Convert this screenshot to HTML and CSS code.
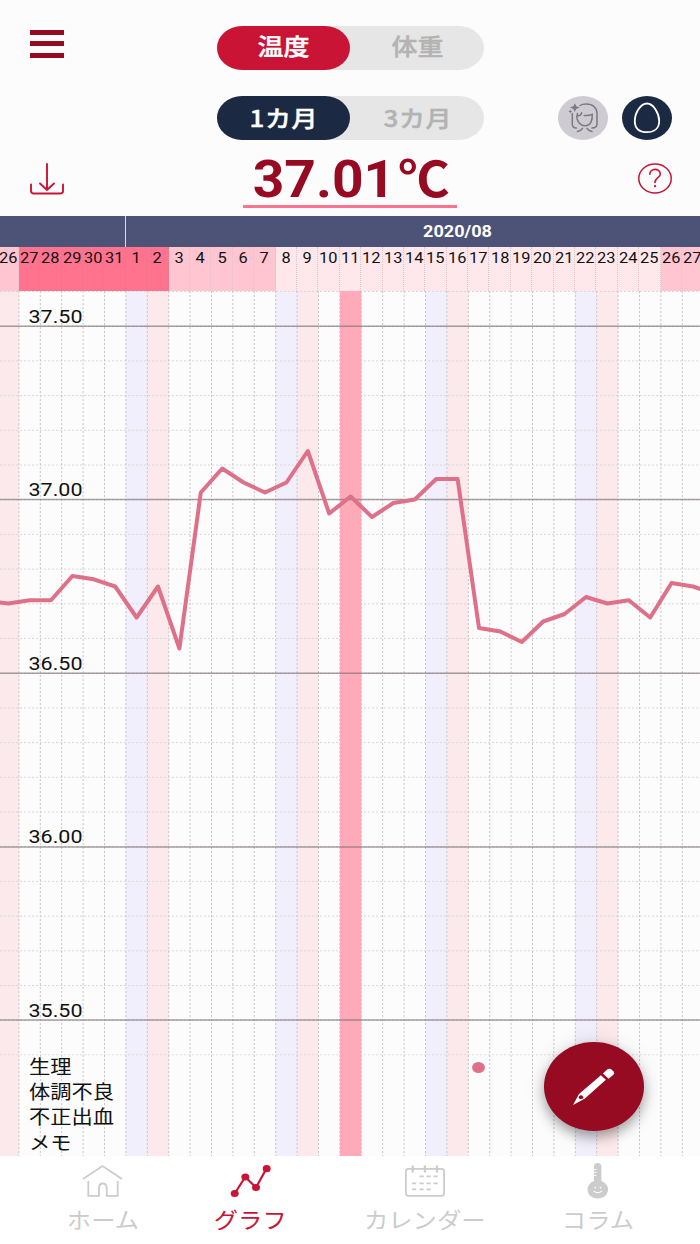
FILE: index.html
```html
<!DOCTYPE html>
<html lang="ja">
<head>
<meta charset="utf-8">
<title>グラフ</title>
<link rel="stylesheet" href="styles.css">
</head>
<body>
<div class="app">
  <header class="header">
    <button class="menu" aria-label="menu"><i></i><i></i><i></i></button>
    <div class="toggle toggle-red"><span class="option on"><b>温度</b></span><span class="option"><b>体重</b></span></div>
    <div></div>

    <div></div>
    <div class="toggle toggle-navy"><span class="option on"><b>1カ月</b></span><span class="option"><b>3カ月</b></span></div>
    <div class="modes">
      <svg width="50" height="44" viewBox="0 0 50 44"><ellipse cx="25" cy="22" rx="25" ry="22" fill="#cfcbd3"/>
        <g fill="none" stroke="#7b7b7f" stroke-width="1.500" stroke-linecap="round">
          <path d="M14.300 17.500V28c0 2.600 1.300 4 4 4.100M22 9.500c1.800-1.200 4-1.500 6.300-1.500C35 8 39 12 39 17.500V28c0 2.600-1.800 4-5 4.100"/>
          <path d="M19.500 17.500C17.500 23 21 29.700 27 29.700S34.600 24 34.200 18.300C31.500 19.700 29 19.400 26.200 19.400M20.300 19.800c2-.300 3-1.500 3.300-3"/>
          <path d="M19.500 35.500c2.500-.5 4-1.500 5-3.200M34 35.500c-2.500-.5-4-1.500-5-3.200"/>
        </g>
        <path d="M16.800 7.200l1.400 3 3.500 1.400-3.500 1.400-1.400 3-1.400-3-3.500-1.400 3.500-1.400zM12.300 13.400l.6 1.400 1.400.6-1.400.6-.6 1.400-.6-1.400-1.400-.6 1.400-.6z" fill="#7b7b7f"/>
      </svg>
      <svg width="50" height="44" viewBox="0 0 50 44"><ellipse cx="25" cy="22" rx="25" ry="22" fill="#1c2942"/><path d="M25 7.500C18.500 7.500 12.800 17 12.800 25S18 36.200 25 36.200 37.200 32.500 37.200 25 31.500 7.500 25 7.500z" fill="none" stroke="#fff" stroke-width="1.800"/></svg>
    </div>

    <svg class="download" width="34" height="32" viewBox="0 0 34 32" fill="none" stroke="#c91436" stroke-width="1.900" stroke-linecap="round" stroke-linejoin="round"><path d="M17 1v26M10 20.500l7 6.500 7-6.500M1 21.500V28q0 2.500 3 2.500H30q3 0 3-2.500V21.500"/></svg>
    <div class="reading"><strong>37.01<span>℃</span></strong></div>
    <svg class="help" width="34" height="31" viewBox="0 0 34 31" fill="none" stroke="#c91436"><ellipse cx="17" cy="15.500" rx="16.200" ry="14.500" stroke-width="1.500"/><path d="M11.800 11.300C11.800 4.800 22.300 4.800 22.300 11 22.300 14.800 17 14.800 17 19.500" stroke-width="1.600" stroke-linecap="round"/><ellipse cx="17" cy="23.200" rx="1.200" ry="1.100" fill="#c91436" stroke="none"/></svg>
  </header>

  <div class="months"><span></span><span><b>2020/08</b></span></div>

  <div class="days">
    <span class="mid"><b>26</b></span><span class="hot"><b>27</b></span><span class="hot"><b>28</b></span><span class="hot"><b>29</b></span><span class="hot"><b>30</b></span><span class="hot"><b>31</b></span><span class="hot"><b>1</b></span><span class="hot"><b>2</b></span><span class="mid"><b>3</b></span><span class="mid"><b>4</b></span><span class="mid"><b>5</b></span><span class="mid"><b>6</b></span><span class="mid"><b>7</b></span><span><b>8</b></span><span><b>9</b></span><span><b>10</b></span><span><b>11</b></span><span><b>12</b></span><span><b>13</b></span><span><b>14</b></span><span><b>15</b></span><span><b>16</b></span><span><b>17</b></span><span><b>18</b></span><span><b>19</b></span><span><b>20</b></span><span><b>21</b></span><span><b>22</b></span><span><b>23</b></span><span><b>24</b></span><span><b>25</b></span><span class="mid"><b>26</b></span><span class="mid"><b>27</b></span>
  </div>

  <main class="chart">
    <svg width="700" height="865" viewBox="0 291 700 865">
      <defs>
        <pattern id="rows" x="0" y="291" width="4" height="34.700" patternUnits="userSpaceOnUse"><rect width="2.200" height="1" fill="#d9d9d9"/></pattern>
        <pattern id="cols" x="18.400" y="291" width="21.400" height="4" patternUnits="userSpaceOnUse"><rect width="1" height="2.200" fill="#c6c6c6"/></pattern>
      </defs>
      <g fill="#f1effb"><path d="M125.900 291h21.400v865h-21.400zM275.700 291h21.400v865h-21.400zM425.500 291h21.400v865h-21.400zM575.300 291h21.400v865h-21.400z"/></g>
      <g fill="#fce9eb"><path d="M0 291h18.900v865H0zM147.300 291h21.400v865h-21.400zM297.100 291h21.400v865h-21.400zM446.900 291h21.400v865h-21.400zM596.700 291h21.400v865h-21.400z"/></g>
      <rect y="291" width="700" height="764.500" fill="url(#rows)"/>
      <rect y="291" width="700" height="865" fill="url(#cols)"/>
      <rect x="339.900" y="291" width="21.400" height="865" fill="#ffaab9"/>
      <path class="major" d="M0 326.300H700M0 499.500H700M0 673.200H700M0 847H700M0 1020H700"/>
      <polyline class="temp" points="-13,601 8.200,603.500 29.600,600.200 51,600.200 72.400,576 93.800,579.300 115.200,586.500 136.600,617.500 158,586.500 179.400,648.500 200.800,492.500 222.200,468.500 243.600,482.500 265,492.500 286.400,482.500 307.800,451 329.200,513.500 350.600,496.500 372,517 393.400,503 414.800,499.500 436.200,479 457.600,479 479,628 500.400,631.500 521.800,642 543.200,621.500 564.600,614 586,597 607.400,603.500 628.800,600.200 650.200,617.500 671.600,583 693,586.500 714.400,594"/>
      <ellipse cx="478.500" cy="1067.500" rx="6.400" ry="5.500" fill="#de7089"/>
      <g class="scale">
        <text x="28.500" y="322.600" textLength="54" lengthAdjust="spacingAndGlyphs">37.50</text>
        <text x="28.500" y="496.200" textLength="54" lengthAdjust="spacingAndGlyphs">37.00</text>
        <text x="28.500" y="669.500" textLength="54" lengthAdjust="spacingAndGlyphs">36.50</text>
        <text x="28.500" y="843.200" textLength="54" lengthAdjust="spacingAndGlyphs">36.00</text>
        <text x="28.500" y="1016.500" textLength="54" lengthAdjust="spacingAndGlyphs">35.50</text>
      </g>
      <g class="notes">
        <text x="29" y="1073.500" textLength="42.500" lengthAdjust="spacingAndGlyphs">生理</text>
        <text x="29" y="1099" textLength="85" lengthAdjust="spacingAndGlyphs">体調不良</text>
        <text x="29" y="1124.300" textLength="85" lengthAdjust="spacingAndGlyphs">不正出血</text>
        <text x="29" y="1149.500" textLength="42.500" lengthAdjust="spacingAndGlyphs">メモ</text>
      </g>
    </svg>
    <button class="edit" aria-label="edit">
      <svg width="42" height="38" viewBox="0 0 42 38" fill="#fff"><path d="M0 37L6 26 27.900 7.200 32.900 11.800 11.600 30.800z"/><path d="M29.900 5.400L34.200 1.600Q36.400 0 38.500 1.500L40.600 3.500Q42 5.200 40.400 6.800L35.600 10.800z"/><ellipse cx="8" cy="29.200" rx="2.200" ry="1.900" fill="#960a22"/></svg>
    </button>
  </main>

  <nav class="tabs">
    <a class="tab"><svg width="42" height="38" viewBox="0 0 42 38" fill="none" stroke="#ccc" stroke-width="1.800"><path d="M1 18L20.500 5 40 18" /><path d="M6.300 20V34.800H17V27Q17 22.500 20.800 22.500T24.700 27V34.800H35.700V20"/></svg><span>ホーム</span></a>
    <a class="tab active"><svg width="42" height="38" viewBox="0 0 42 38" fill="#c91436"><path d="M5.700 32.500L16.300 16 27 26.500 37.500 7.500" fill="none" stroke="#c91436" stroke-width="2.200"/><ellipse cx="5.700" cy="32.500" rx="4" ry="3.600"/><ellipse cx="16.300" cy="16" rx="4" ry="3.600"/><ellipse cx="27" cy="26.500" rx="4" ry="3.600"/><ellipse cx="37.700" cy="7.700" rx="4" ry="3.600"/></svg><span>グラフ</span></a>
    <a class="tab"><svg width="42" height="38" viewBox="0 0 42 38" fill="none" stroke="#ccc" stroke-width="1.800"><rect x="1.900" y="7.800" width="38.200" height="27" rx="2.500"/><path d="M8.700 4.500v7M20.900 4.500v7M33 4.500v7" stroke-width="2.200"/><path d="M15.500 15.300h4.200M22.500 15.300h4.200M29.500 15.300h4.200M8 22.300h4.200M15.500 22.300h4.200M22.500 22.300h4.200M29.500 22.300h4.200M8 28.300h4.200M15.500 28.300h4.200M22.500 28.300h4.200"/></svg><span>カレンダー</span></a>
    <a class="tab"><svg width="42" height="38" viewBox="0 0 42 38" fill="#ccc"><path d="M17 20V5.500Q17 2 20.700 2T24.400 5.500V20Q31 22.500 31 28.500C31 34 26.500 37.500 20.800 37.500S10.600 34 10.600 28.500Q10.600 22.500 17 20z"/><path d="M17 8.500h2.500M17 11.500h2.500M17 14.500h2.500M16.500 29.800q4.300 3.800 8.600 0" fill="none" stroke="#fff" stroke-width="1.100"/><circle cx="18.300" cy="26.600" r=".9" fill="#fff"/><circle cx="23.500" cy="26.600" r=".9" fill="#fff"/></svg><span>コラム</span></a>
  </nav>
</div>
</body>
</html>
```

FILE: styles.css
```css
* { box-sizing: border-box; }
body { margin: 0; background: #fff; font-family: Roboto, "Noto Sans CJK JP", sans-serif; }
button { border: 0; padding: 0; background: none; }
svg { display: block; }

.app { width: 700px; height: 1244px; display: flex; flex-direction: column; overflow: hidden; }

.header {
  height: 216px;
  background: #fcfcfc;
  padding: 26px 28px 0 30px;
  display: grid;
  grid-template-columns: 186.500px 267.500px 1fr;
  grid-template-rows: 44px 44px 52px;
  row-gap: 25.500px;
}
.menu { width: 34px; height: 28px; margin-top: 3.500px; display: flex; flex-direction: column; justify-content: space-between; }
.menu i { height: 5px; background: #960a22; }

.toggle { display: flex; background: #e6e6e6; border-radius: 25px / 22px; }
.option {
  width: 50%;
  border-radius: 25px / 22px;
  display: flex;
  align-items: center;
  justify-content: center;
  color: #b3b3b3;
  font: 500 23px/40px "Noto Sans CJK JP", sans-serif;
}
.option b { font-weight: 500; -webkit-text-stroke: .4px currentColor; transform: translateX(.5px) scaleX(1.13); }
.option.on { color: #fff; }
.toggle-red .option { padding-bottom: 6px; }
.toggle-navy .option { padding-bottom: 1px; letter-spacing: .5px; }
.toggle-red .on { background: #c91436; }
.toggle-navy .on { background: #1c2942; }
.modes { display: flex; justify-content: flex-end; gap: 14px; }

.header > .reading { margin-top: -10px; }
.header > .download { margin-top: -2.500px; }
.header > .help { margin-top: -2px; justify-self: end; }
.reading {
  justify-self: center;
  width: 214px;
  height: 53px;
  border-bottom: 3px solid #ff738e;
  display: flex;
  justify-content: center;
  color: #960a22;
}
.reading strong { font-size: 51px; line-height: 49px; white-space: nowrap; transform: scaleX(1.08); }
.reading span { display: inline-block; font-size: 49px; transform: translateX(2px) scaleX(.97); }

.months { height: 31px; background: #4d5377; display: flex; color: #fff; font-size: 16px; line-height: 31px; }
.months span { flex: none; width: 126px; border-right: 1px solid #dcdde4; }
.months span + span { width: 663px; border: 0; text-align: center; }
.months b { display: inline-block; transform: scaleX(1.13); }

.days { height: 44px; display: flex; margin-left: -2.500px; }
.days span {
  flex: none;
  width: 21.400px;
  background: #ffe8eb;
  border-right: 1px dotted #ddc5c9;
  display: flex;
  justify-content: center;
  font-size: 14.500px;
  line-height: 23px;
  color: #111;
}
.days b { font-weight: 400; transform: scaleX(1.13); }
.days .mid { background: #ffc5d1; }
.days .hot { background: #ff738e; border-color: #e4788d; }

.chart { position: relative; height: 865px; background: #fcfcfc; }
.major { stroke: #7a7073; stroke-opacity: .65; stroke-width: 1.500; }
.temp { fill: none; stroke: #de7089; stroke-width: 4; stroke-linejoin: round; }
.scale { font-size: 19px; fill: #111; }
.notes { font: 18.800px "Noto Sans CJK JP", sans-serif; fill: #111; }
.edit {
  position: absolute;
  left: 544px;
  top: 751px;
  width: 99.500px;
  height: 89px;
  border-radius: 50%;
  background: #960a22;
  box-shadow: 0 6px 12px rgba(0, 0, 0, .3), 0 2px 22px rgba(0, 0, 0, .12);
  display: flex;
  align-items: center;
  justify-content: center;
}

.tabs { height: 88px; background: #fff; padding: 0 29.500px; display: grid; grid-template-columns: 147px 147px 202px 145px; }
.tab { display: flex; flex-direction: column; align-items: center; padding-top: 5px; color: #ccc; }
.tab span { font: 21.500px/34px "Noto Sans CJK JP", sans-serif; margin-top: 3px; transform: scaleX(1.13); white-space: nowrap; }
.tab.active { color: #c91436; }
```
